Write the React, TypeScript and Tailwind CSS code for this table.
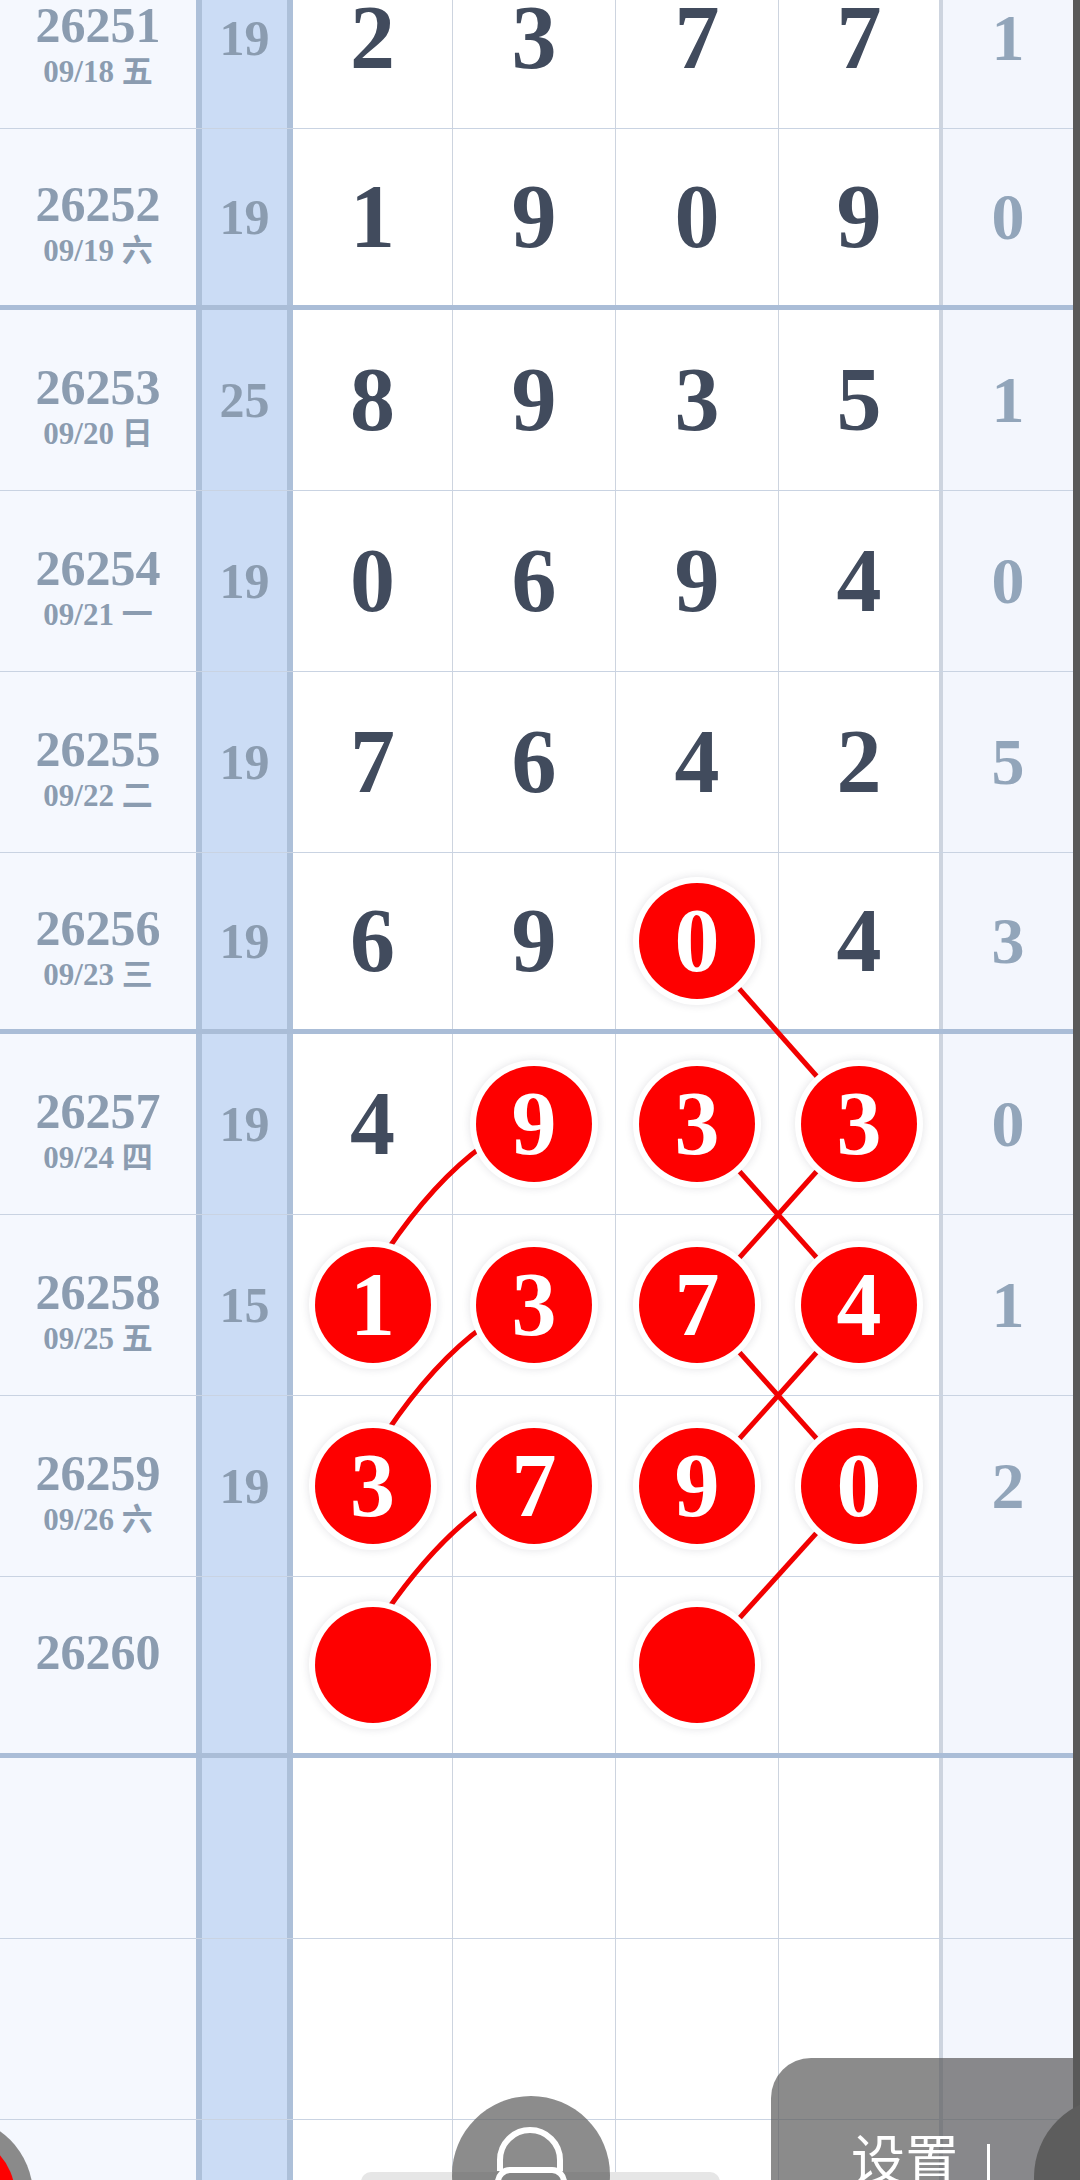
import React from 'react';

type Row = {
  issue: string;
  date: string;
  sum: string;
  digits: string[];
  right: string;
  thick?: boolean;
  balls?: number[];
};

const ROW_H = 181;
const COL_X = [372.5, 534, 697, 859];

const rows: Row[] = [
  { issue: '26251', date: '09/18 五', sum: '19', digits: ['2', '3', '7', '7'], right: '1' },
  { issue: '26252', date: '09/19 六', sum: '19', digits: ['1', '9', '0', '9'], right: '0', thick: true },
  { issue: '26253', date: '09/20 日', sum: '25', digits: ['8', '9', '3', '5'], right: '1' },
  { issue: '26254', date: '09/21 一', sum: '19', digits: ['0', '6', '9', '4'], right: '0' },
  { issue: '26255', date: '09/22 二', sum: '19', digits: ['7', '6', '4', '2'], right: '5' },
  { issue: '26256', date: '09/23 三', sum: '19', digits: ['6', '9', '0', '4'], right: '3', thick: true, balls: [2] },
  { issue: '26257', date: '09/24 四', sum: '19', digits: ['4', '9', '3', '3'], right: '0', balls: [1, 2, 3] },
  { issue: '26258', date: '09/25 五', sum: '15', digits: ['1', '3', '7', '4'], right: '1', balls: [0, 1, 2, 3] },
  { issue: '26259', date: '09/26 六', sum: '19', digits: ['3', '7', '9', '0'], right: '2', balls: [0, 1, 2, 3] },
  { issue: '26260', date: '', sum: '', digits: ['', '', '', ''], right: '', thick: true, balls: [0, 2] },
  { issue: '', date: '', sum: '', digits: ['', '', '', ''], right: '' },
  { issue: '', date: '', sum: '', digits: ['', '', '', ''], right: '' },
  { issue: '', date: '', sum: '', digits: ['', '', '', ''], right: '' },
];

// [col, row] pairs joined by a red line
const straight: [number, number, number, number][] = [
  [2, 5, 3, 6],
  [3, 6, 2, 7],
  [2, 6, 3, 7],
  [2, 7, 3, 8],
  [3, 7, 2, 8],
  [3, 8, 2, 9],
];
const curved: [number, number, number, number][] = [
  [1, 6, 0, 7],
  [1, 7, 0, 8],
  [1, 8, 0, 9],
];

const cy = (i: number) => i * ROW_H + (ROW_H - (rows[i].thick ? 5 : 1)) / 2;

const serif = "font-['Liberation_Serif','Noto_Sans_CJK_SC',serif] font-bold";

const cellW = ['w-[160px] border-r', 'w-[163px] border-r', 'w-[163px] border-r', 'w-[164px] border-r-[4px] border-r-[#adc0d9]'];

function Ball({ n }: { n: string }) {
  return (
    <div className="relative z-10 flex h-[116px] w-[116px] items-center justify-center rounded-full bg-[#fe0000] shadow-[0_0_0_6px_#ffffff,0_0_9px_6px_rgba(40,40,60,0.13)]">
      <span className={`${serif} text-[90px] leading-none text-white`}>{n}</span>
    </div>
  );
}

function Links() {
  return (
    <svg className="pointer-events-none absolute left-0 top-0" width={1073} height={ROW_H * rows.length}>
      {straight.map(([c1, r1, c2, r2], i) => (
        <line key={i} x1={COL_X[c1]} y1={cy(r1)} x2={COL_X[c2]} y2={cy(r2)} stroke="#f20000" strokeWidth={5} />
      ))}
      {curved.map(([c1, r1, c2, r2], i) => {
        const ax = COL_X[c1];
        const ay = cy(r1);
        const bx = COL_X[c2];
        const by = cy(r2);
        return (
          <path
            key={i}
            d={`M ${ax - 50} ${ay + 21} Q ${ax - 100} ${ay + 57} ${bx + 13.5} ${by - 53}`}
            fill="none"
            stroke="#f20000"
            strokeWidth={5}
          />
        );
      })}
    </svg>
  );
}

export default function App() {
  return (
    <div className="relative flex h-[2180px] w-[1080px] items-start overflow-hidden bg-white">
      <div className="relative -mt-[52px] w-[1073px] shrink-0">
        {rows.map((r, i) => (
          <div
            key={i}
            className={`flex h-[181px] ${r.thick ? 'border-b-[5px] border-b-[#aabdd7]' : 'border-b border-b-[#c9d3e2]'}`}
          >
            <div className="flex w-[202px] flex-col items-center justify-center border-r-[6px] border-r-[#adc0d9] bg-[#f5f8fe] pt-[8px] text-[#8b9cb0]">
              <span className={`${serif} text-[50px] leading-[60px]`}>{r.issue}</span>
              <span className={`${serif} h-[34px] text-[31px] leading-[34px]`}>{r.date}</span>
            </div>
            <div className="flex w-[91px] items-center justify-center border-r-[6px] border-r-[#adc0d9] bg-[#cbdcf5]">
              <span className={`${serif} text-[50px] leading-none text-[#8b9cb0]`}>{r.sum}</span>
            </div>
            {r.digits.map((d, j) => (
              <div key={j} className={`flex items-center justify-center border-r-[#cdd4df] bg-white ${cellW[j]}`}>
                {r.balls?.includes(j) ? (
                  <Ball n={d} />
                ) : (
                  <span className={`${serif} text-[90px] leading-none text-[#414b5d]`}>{d}</span>
                )}
              </div>
            ))}
            <div className="flex w-[130px] items-center justify-center bg-[#f3f6fd]">
              <span className={`${serif} text-[66px] leading-none text-[#92a5ba]`}>{r.right}</span>
            </div>
          </div>
        ))}
        <Links />
      </div>
      <div className="h-[2180px] w-[7px] shrink-0 bg-[#595959]" />

      {/* floating controls at the bottom */}
      <div className="absolute left-[-123px] top-[2117px] flex h-[156px] w-[156px] items-center justify-center rounded-full bg-[#8a8a8a]">
        <div className="h-[120px] w-[120px] rounded-full bg-[#fe0000]" />
      </div>

      <div className="absolute left-[361px] top-[2172px] h-[20px] w-[359px] rounded-full bg-[#e6e6e6]" />
      <div className="absolute left-[452px] top-[2096px] h-[158px] w-[158px] rounded-full bg-[rgba(95,95,95,0.72)]">
        <svg width={158} height={158} viewBox="0 0 158 158">
          <path d="M48 75 V64 A30 30 0 0 1 108 64 V75" fill="none" stroke="#fff" strokeWidth={6} />
          <rect x={46} y={74} width={66} height={62} rx={12} fill="none" stroke="#fff" strokeWidth={6} />
        </svg>
      </div>

      <div className="absolute left-[771px] top-[2058px] h-[140px] w-[309px] rounded-tl-[40px] bg-[rgba(90,90,90,0.7)] pl-[80px] pt-[72px]">
        <span className="font-['Noto_Sans_CJK_SC',sans-serif] text-[54px] leading-none text-white">设置</span>
        <span className="ml-[28px] mt-[14px] inline-block h-[60px] w-[3px] bg-white align-top" />
      </div>
      <div className="absolute left-[1034px] top-[2097px] h-[160px] w-[160px] rounded-full bg-[#5d5d5d]" />
    </div>
  );
}
